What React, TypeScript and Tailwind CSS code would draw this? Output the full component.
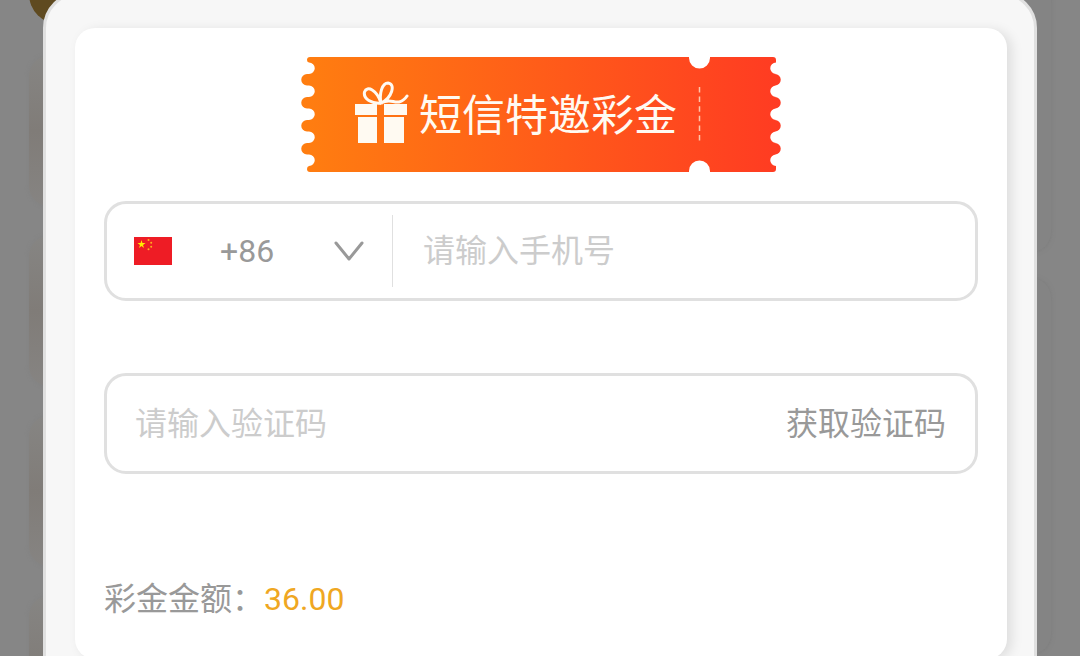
import React, { useState } from 'react';

const ticketPath =
  'M9 0 H388 V1 A10.5 10.5 0 0 0 409 1 V0 H472 Q475 0 475 3 Q475 5.5 475 5.5 ' +
  'A5.75 5.75 0 0 0 475 17 H474 A5.75 5.75 0 0 1 474 28.5 H475 ' +
  'A5.75 5.75 0 0 0 475 40 H474 A5.75 5.75 0 0 1 474 51.5 H475 ' +
  'A5.75 5.75 0 0 0 475 63 H474 A5.75 5.75 0 0 1 474 74.5 H475 ' +
  'A5.75 5.75 0 0 0 475 86 H474 A5.75 5.75 0 0 1 474 97.5 H475 ' +
  'A5.75 5.75 0 0 0 475 109 V112 Q475 115 472 115 ' +
  'H409 V114 A10.5 10.5 0 0 0 388 114 V115 H9 Q6 115 6 112 Q6 109.5 8 109 ' +
  'A5.75 5.75 0 0 0 8 97.5 H6 A5.75 5.75 0 0 1 6 86 H8 ' +
  'A5.75 5.75 0 0 0 8 74.5 H6 A5.75 5.75 0 0 1 6 63 H8 ' +
  'A5.75 5.75 0 0 0 8 51.5 H6 A5.75 5.75 0 0 1 6 40 H8 ' +
  'A5.75 5.75 0 0 0 8 28.5 H6 A5.75 5.75 0 0 1 6 17 H8 ' +
  'A5.75 5.75 0 0 0 8 5.5 Q6 5 6 3 Q6 0 9 0 Z';

const Ticket = () => (
  <svg viewBox="0 0 480 115" className="absolute inset-0 w-full h-full" aria-hidden="true">
    <defs>
      <linearGradient id="ticket" x1="0" y1="0" x2="1" y2="0">
        <stop offset="0" stopColor="#ff7e10" />
        <stop offset="1" stopColor="#ff3b22" />
      </linearGradient>
    </defs>
    <path d={ticketPath} fill="url(#ticket)" />
    <path d="M398.5 30 V86" stroke="#ffc4a8" strokeWidth="1.5" strokeDasharray="5.5 4.1" />
  </svg>
);

const GiftIcon = () => (
  <svg viewBox="0 0 54 67" className="w-[54px] h-[67px]" fill="#fffaf2" aria-hidden="true">
    <path d="M0 23H22V34H0Z M29 23H52V34H29Z M3 36H22V62H3Z M29 36H49V62H29Z" />
    <path
      d="M26 22 C17 23 8 18 9.5 11 C12 4 22 9 26 22 Z M26 22 C24 13 27 2 33 2 C41 3 37 17 26 22 Z M26 22 C35 17 38 22 44 21 C48 20 50 18 52 15"
      fill="none"
      stroke="#fffaf2"
      strokeWidth="3"
      strokeLinecap="round"
    />
  </svg>
);

const ChinaFlag = () => (
  <svg viewBox="0 0 38 28" className="w-[38px] h-7 shrink-0" role="img" aria-label="中国">
    <rect width="38" height="28" fill="#ee1c25" />
    <path d="M7.5 3 8.4 6 11.5 6 9 7.9 10 11 7.5 9.1 5 11 6 7.9 3.5 6 6.6 6Z" fill="#ffee00" />
    <g fill="#ffb020">
      <circle cx="14.5" cy="3" r="1" />
      <circle cx="17.2" cy="5.7" r="1" />
      <circle cx="17.2" cy="9.7" r="1" />
      <circle cx="14.5" cy="12.3" r="1" />
    </g>
  </svg>
);

const Backdrop = () => (
  <div className="absolute inset-0 bg-[#868686]" aria-hidden="true">
    <div className="absolute left-[29px] -top-9 w-[60px] h-[60px] rounded-full bg-[#5f4a20]" />
    <div className="absolute right-[43px] top-0 w-24 h-10 bg-[#43388a]" />
    <div className="absolute right-[52px] top-0 w-24 h-10 bg-black" />
    <div className="absolute left-[29px] top-14 flex flex-col gap-[30px]">
      {[0, 1, 2, 3].map((i) => (
        <div
          key={i}
          className="w-40 h-[150px] rounded-[20px] bg-linear-to-b from-[#868583] via-[#807c78] to-[#868482] shadow-[0_0_4px_#828282]"
        />
      ))}
    </div>
    <div className="absolute right-[29px] -top-5 flex flex-col gap-[26px]">
      <div className="w-40 h-[272px] rounded-[20px] bg-[#848484] shadow-[0_0_4px_#7c7c7c]" />
      <div className="w-40 h-[376px] rounded-[20px] bg-[#848484] shadow-[0_0_4px_#7c7c7c]" />
    </div>
  </div>
);

const App = () => {
  const [areaCode, setAreaCode] = useState('+86');
  const [phone, setPhone] = useState('');
  const [code, setCode] = useState('');

  return (
    <div className="relative flex flex-col h-screen overflow-hidden font-['Roboto','Noto_Sans_CJK_SC',sans-serif] text-[32px] text-[#999]">
      <Backdrop />

      {/* Dialog */}
      <div className="relative grow shrink-0 -mt-2 mx-[43px] pt-[33px] pl-[29px] pr-[27px] pb-8 bg-[#f7f7f7] border-[3px] border-[#e0e0e0] rounded-t-[36px]">
        <form
          className="bg-white rounded-[20px] px-[29px] pt-[29px] pb-9 shadow-[5px_2px_12px_rgba(0,0,0,0.1)]"
          onSubmit={(e) => e.preventDefault()}
        >
          {/* Ticket title */}
          <div className="relative w-[480px] h-[115px] mx-auto flex items-center pl-[54px] gap-2.5">
            <Ticket />
            <div className="relative">
              <GiftIcon />
            </div>
            <h1 className="relative pt-1 text-[43px] leading-none text-[#fffaf2]">短信特邀彩金</h1>
          </div>

          {/* Phone number */}
          <div className="mt-[29px] h-[100px] flex items-center pl-[27px] border-[3px] border-[#e0e0e0] rounded-[22px]">
            <ChinaFlag />
            <div className="relative w-[221px] h-[72px] shrink-0 border-r border-[#e0e0e0]">
              <select
                aria-label="区号"
                value={areaCode}
                onChange={(e) => setAreaCode(e.target.value)}
                className="appearance-none w-full h-full pl-12 bg-transparent outline-none"
              >
                <option value="+86">+86</option>
              </select>
              <svg
                viewBox="0 0 30 20"
                className="absolute right-7 top-[26px] w-[30px] h-5 pointer-events-none"
                fill="none"
                stroke="#999"
                strokeWidth="3"
                strokeLinecap="round"
                strokeLinejoin="round"
              >
                <path d="M2 2 L15 18 L28 2" />
              </svg>
            </div>
            <input
              type="tel"
              aria-label="手机号"
              placeholder="请输入手机号"
              value={phone}
              onChange={(e) => setPhone(e.target.value)}
              className="grow min-w-0 h-full pl-[30px] outline-none placeholder:text-[#ccc]"
            />
          </div>

          {/* Verification code */}
          <div className="mt-[72px] h-[101px] flex items-center pl-7 pr-[29px] border-[3px] border-[#e0e0e0] rounded-[22px]">
            <input
              type="text"
              aria-label="验证码"
              placeholder="请输入验证码"
              value={code}
              onChange={(e) => setCode(e.target.value)}
              className="grow min-w-0 h-full outline-none placeholder:text-[#ccc]"
            />
            <button type="button" className="shrink-0 whitespace-nowrap">获取验证码</button>
          </div>

          {/* Bonus amount */}
          <p className="mt-[101px] leading-[48px]">
            彩金金额：<span className="text-[#efa722]">36.00</span>
          </p>
        </form>
      </div>
    </div>
  );
};

export default App;
